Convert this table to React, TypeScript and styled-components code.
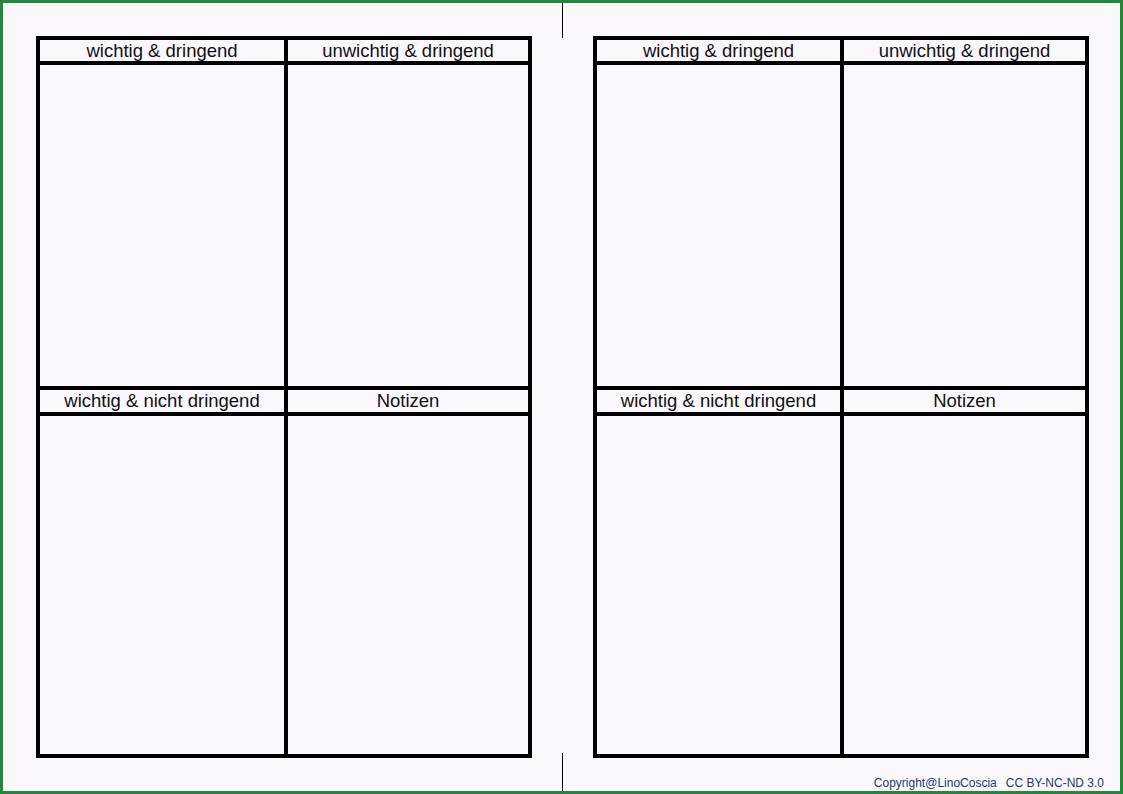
import styled, { createGlobalStyle } from 'styled-components'

const GlobalStyle = createGlobalStyle`
  html, body {
    margin: 0;
    padding: 0;
    background: #faf8fc;
  }
`

type SheetProps = {
  $split: number
}

const topRow = ['wichtig & dringend', 'unwichtig & dringend']
const bottomRow = ['wichtig & nicht dringend', 'Notizen']

const Page = styled.div`
  box-sizing: border-box;
  width: 1123px;
  height: 794px;
  border: 3px solid #21893a;
  background: #faf8fc;
  display: flex;
  font-family: 'Liberation Sans', Arial, sans-serif;
  color: #111;
  overflow: hidden;
`

const LeftSide = styled.div`
  padding: 33px 0 0 33px;
`

const RightSide = styled.div`
  flex: 1;
  display: flex;
  flex-direction: column;
  padding: 33px 16px 0 0;
`

const Fold = styled.div`
  width: 1px;
  margin: 0 30px;
  display: flex;
  flex-direction: column;
  justify-content: space-between;
`

const Tick = styled.div<{ $h: number }>`
  width: 1px;
  height: ${(p) => p.$h}px;
  background: #000;
`

const Sheet = styled.div<SheetProps>`
  display: grid;
  grid-template-columns: ${(p) => p.$split}px ${(p) => 484 - p.$split}px;
  grid-template-rows: 21px 321px 22px 338px;
  gap: 4px;
  padding: 4px;
  width: 496px;
  box-sizing: border-box;
  background: #000;
  align-self: flex-start;
`

const Head = styled.div`
  background: #faf8fc;
  font-size: 18.5px;
  line-height: 20px;
  padding-top: 1px;
  box-sizing: border-box;
  text-align: center;
  white-space: nowrap;
`

const Box = styled.div`
  background: #faf8fc;
`

const Footer = styled.div`
  align-self: flex-end;
  margin-top: 18px;
  font-size: 12px;
  line-height: 14px;
  color: #27386a;
  display: flex;
  gap: 9px;
`

const Matrix = ({ split }: { split: number }) => (
  <Sheet $split={split}>
    {topRow.map((t) => <Head key={t}>{t}</Head>)}
    <Box />
    <Box />
    {bottomRow.map((t) => <Head key={t}>{t}</Head>)}
    <Box />
    <Box />
  </Sheet>
)

const App = () => (
  <>
    <GlobalStyle />
    <Page>
      <LeftSide>
        <Matrix split={244} />
      </LeftSide>
      <Fold>
        <Tick $h={35} />
        <Tick $h={38} />
      </Fold>
      <RightSide>
        <Matrix split={243} />
        <Footer>
          <span>Copyright@LinoCoscia</span>
          <span>CC BY-NC-ND 3.0</span>
        </Footer>
      </RightSide>
    </Page>
  </>
)

export default App
